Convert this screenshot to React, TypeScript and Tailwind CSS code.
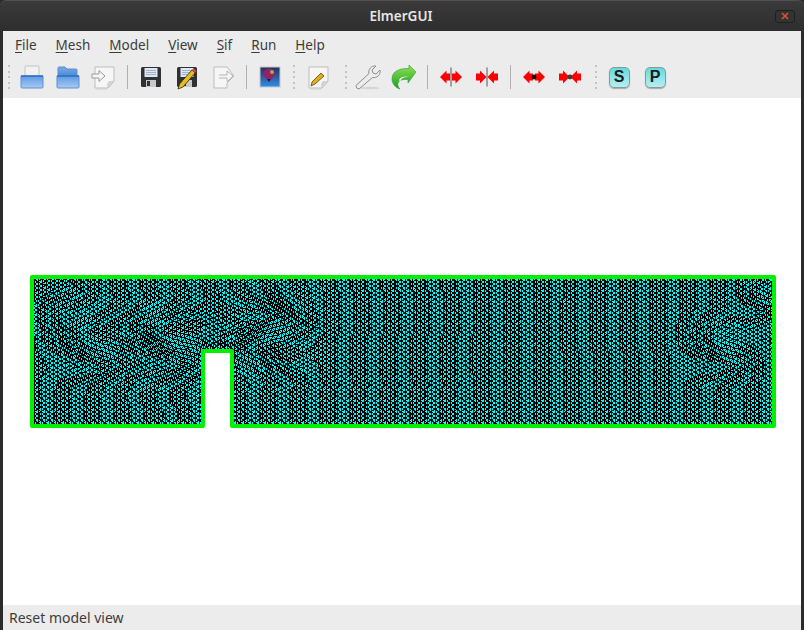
import { useMemo, type ReactNode } from 'react';

const MENUS = ['File', 'Mesh', 'Model', 'View', 'Sif', 'Run', 'Help'];

function Glyph({ children }: { children: ReactNode }) {
  return (
    <div className="flex h-[36px] w-[36px] shrink-0 items-center justify-center">
      <svg width="26" height="26" viewBox="0 0 26 26">
        {children}
      </svg>
    </div>
  );
}

function Dotted({ className }: { className: string }) {
  return (
    <div className={`flex h-[24px] w-[2px] shrink-0 flex-col justify-between ${className}`}>
      {[0, 1, 2, 3, 4].map((i) => (
        <span key={i} className="h-[2px] w-[2px] bg-[#c4c4c4]" />
      ))}
    </div>
  );
}

function Solid({ className }: { className: string }) {
  return <div className={`h-[24px] w-px shrink-0 bg-[#b0b0b0] ${className}`} />;
}

function PageShape({ children }: { children?: ReactNode }) {
  return (
    <>
      <path d="M4 3h19v14l-6 7H4z" fill="#f6f6f6" stroke="#bdbdbd" />
      <path d="M17 24q-1-5 1-6.500q3 .5 5-.5z" fill="#d6d6d6" stroke="#bdbdbd" strokeWidth="0.6" />
      <path d="M5 25h11" stroke="#cfcfcf" />
      {children}
    </>
  );
}

function FolderTray() {
  return (
    <>
      <path d="M2 12h22v11q0 1-1 1H3q-1 0-1-1z" fill="url(#blue)" stroke="#5e8fd0" />
      <path d="M2 12h22" stroke="#2f6dc0" strokeWidth="1.5" />
    </>
  );
}

function Floppy({ children }: { children?: ReactNode }) {
  return (
    <>
      <rect x="3" y="3" width="20" height="20" rx="1.5" fill="#2e3236" />
      <rect x="6.5" y="4" width="13" height="9" fill="#dfe6ee" />
      <path d="M8 6.500h10M8 8.500h10M8 10.500h10" stroke="#9db4cf" />
      <rect x="8" y="16" width="10" height="7" fill="#c8c8c8" />
      <rect x="9" y="17" width="3" height="5" fill="#333" />
      {children}
    </>
  );
}

function RedArrows({ inward, dot }: { inward?: boolean; dot?: boolean }) {
  const left = inward ? 'M2 9.500h4V6.500l6.500 6.500L6 19.500v-3H2z' : 'M2 13l6.500-6.500v3H12v7H8.500v3z';
  const right = inward ? 'M24 9.500h-4V6.500L13.500 13l6.500 6.500v-3h4z' : 'M24 13l-6.500-6.500v3H14v7h3.500v3z';
  return (
    <>
      <path d={left} fill="#f00" />
      <path d={right} fill="#f00" />
      {dot ? (
        <circle cx="13" cy="13" r="2.400" fill={inward ? '#3c3c3c' : '#111'} />
      ) : (
        <path d="M13 3.500v19" stroke="#555" strokeWidth="1" />
      )}
    </>
  );
}

function Badge({ letter }: { letter: string }) {
  return (
    <div className="flex h-[36px] w-[36px] shrink-0 items-center justify-center">
      <div className="flex h-[21px] w-[21px] items-center justify-center rounded-[5px] border border-[#7f9c9e] bg-gradient-to-b from-[#5fdade] to-[#b6eef0] font-['Liberation_Sans',sans-serif] text-[16px] leading-none font-bold text-[#1c1c1c] shadow-[0_1px_1px_#aaa]">
        {letter}
      </div>
    </div>
  );
}

// triangles with upright edges, the columns staggered, nudged around the notch
function buildMesh() {
  const dx = 3.75;
  const dy = 4.4;
  const warps = [
    { x: 170, y: 345, r: 42, k: 4 },
    { x: 262, y: 335, r: 38, k: -4 },
    { x: 90, y: 350, r: 34, k: 3 },
    { x: 720, y: 350, r: 30, k: 3 },
    { x: 60, y: 300, r: 24, k: -2 },
    { x: 760, y: 300, r: 20, k: 2 },
  ];
  const at = (c: number, r: number): [number, number] => {
    let x = 30 + c * dx;
    let y = 273 + r * dy + (c % 2 ? dy / 2 : 0);
    for (const w of warps) {
      const ox = x - w.x;
      const oy = y - w.y;
      const f = Math.exp(-(ox * ox + oy * oy) / (w.r * w.r));
      x += (Math.sin(oy * 0.09) * w.k + (oy / w.r) * w.k * 0.7) * f;
      y += (Math.cos(ox * 0.08) * w.k * 0.8 - (ox / w.r) * w.k * 0.7) * f;
    }
    return [Math.round(x), Math.round(y)];
  };
  let d = '';
  for (let c = 0; c < 201; c++) {
    for (let r = 0; r < 37; r++) {
      const p = at(c, r);
      const south = at(c, r + 1);
      const east = at(c + 1, c % 2 ? r : r - 1);
      const other = at(c + 1, c % 2 ? r + 1 : r);
      d += `M${p[0]} ${p[1]}L${south[0]} ${south[1]}M${p[0]} ${p[1]}L${east[0]} ${east[1]}M${p[0]} ${p[1]}L${other[0]} ${other[1]}`;
    }
  }
  return d;
}

const OUTLINE = '32,277 774,277 774,426 232,426 232,351 203,351 203,426 32,426';

function MeshView() {
  const d = useMemo(buildMesh, []);
  return (
    <svg width="798" height="507" viewBox="3 98 798 507" className="block">
      <defs>
        <clipPath id="meshClip">
          <polygon points={OUTLINE} />
        </clipPath>
      </defs>
      <polygon points={OUTLINE} fill="#00ffff" />
      <path d={d} clipPath="url(#meshClip)" fill="none" stroke="#000" strokeWidth="1" shapeRendering="crispEdges" />
      <path d="M32 426V277H774V426H232V351H203V426Z" fill="none" stroke="#00f000" strokeWidth="4" strokeLinejoin="round" />
    </svg>
  );
}

export default function App() {
  return (
    <div className="flex h-[630px] w-[804px] flex-col overflow-hidden bg-[#2b2b2b] font-['Noto_Sans',sans-serif]">
      <svg width="0" height="0" className="absolute">
        <defs>
          <linearGradient id="blue" x1="0" y1="0" x2="0" y2="1">
            <stop offset="0" stopColor="#5c9ae6" />
            <stop offset="1" stopColor="#a9c9f0" />
          </linearGradient>
          <linearGradient id="blueFold" x1="0" y1="0" x2="0" y2="1">
            <stop offset="0" stopColor="#7aa9e4" />
            <stop offset="1" stopColor="#4c8ad8" />
          </linearGradient>
          <linearGradient id="green" x1="0" y1="0" x2="0" y2="1">
            <stop offset="0" stopColor="#8fe34f" />
            <stop offset="1" stopColor="#1f9a2c" />
          </linearGradient>
          <linearGradient id="sky" x1="0" y1="0" x2="0" y2="1">
            <stop offset="0" stopColor="#2a2a5e" />
            <stop offset="1" stopColor="#2f8fe8" />
          </linearGradient>
        </defs>
      </svg>

      <div className="flex h-[31px] shrink-0 items-center rounded-t-[6px] border-t border-[#505050] bg-gradient-to-b from-[#3a3a3a] to-[#2e2e2e] pr-[9px]">
        <span className="flex-1 pl-[27px] text-center text-[13.5px] font-semibold text-[#e6e6e6]">ElmerGUI</span>
        <div className="flex h-[13px] w-[20px] items-center justify-center rounded-[3px] border border-[#1f1f1f] bg-[#333]">
          <svg width="8" height="8" viewBox="0 0 8 8">
            <path d="M1 1l6 6M7 1L1 7" stroke="#d9503a" strokeWidth="1.7" />
          </svg>
        </div>
      </div>

      <div className="mx-[3px] flex min-h-0 flex-1 flex-col bg-white">
        <div className="flex h-[67px] shrink-0 flex-col bg-[#ececec]">
          <nav className="flex h-[28px] items-center gap-[19px] pl-[12px] text-[13.5px] text-[#3c3c3c]">
            {MENUS.map((m) => (
              <span key={m}>
                <span className="underline decoration-1 underline-offset-2">{m[0]}</span>
                {m.slice(1)}
              </span>
            ))}
          </nav>
          <div className="flex h-[36px] items-center">
            <Dotted className="ml-[5px] mr-[4px]" />
            <Glyph>
              <rect x="6" y="2" width="14" height="12" rx="1" fill="#f2f2f2" stroke="#c4c4c4" />
              <FolderTray />
            </Glyph>
            <Glyph>
              <path d="M3 12V4q0-1 1-1h6l2 2h9q1 0 1 1v6z" fill="url(#blueFold)" stroke="#5f8fcc" />
              <FolderTray />
            </Glyph>
            <Glyph>
              <PageShape>
                <path d="M1 10h7V6.500l6 5.500-6 5.500V14H1z" fill="#f6f6f6" stroke="#9a9a9a" />
              </PageShape>
            </Glyph>
            <Solid className="ml-[5px] mr-[5px]" />
            <Glyph>
              <Floppy />
            </Glyph>
            <Glyph>
              <Floppy>
                <path d="M4 25l1.500-5L18 6l3 3L9 23z" fill="#e8bd1e" stroke="#33260a" strokeWidth="0.8" />
                <path d="M18 6l1.500-2 3 3-1.500 2z" fill="#d8463f" />
              </Floppy>
            </Glyph>
            <Glyph>
              <path d="M4 3h13l7 9-7 7v5H4z" fill="#f6f6f6" stroke="#bdbdbd" />
              <path d="M9 11h8V7M17 17v-3H9" fill="none" stroke="#b5b5b5" />
              <path d="M17 7l6 5-6 6" fill="none" stroke="#b5b5b5" />
            </Glyph>
            <Solid className="ml-[5px] mr-[5px]" />
            <Glyph>
              <rect x="3" y="3" width="20" height="20" fill="url(#sky)" stroke="#c8c8c8" />
              <circle cx="12" cy="10" r="5.500" fill="#8d2468" />
              <circle cx="15" cy="8" r="2" fill="#b9a13c" />
              <path d="M10 15l2 3 2-3z" fill="#3a1030" />
            </Glyph>
            <Dotted className="ml-[5px] mr-[8px]" />
            <div className="-ml-[3px] mr-[3px]">
              <Glyph>
                <PageShape>
                  <path d="M6 22l1-4L16 9l3 3-9 8z" fill="#e2ae1c" stroke="#5b4410" strokeWidth="0.8" />
                </PageShape>
              </Glyph>
            </div>
            <Dotted className="ml-[6px] mr-[3px]" />
            <Glyph>
              <ellipse cx="15" cy="24" rx="10" ry="1.200" fill="#d4d4d4" />
              <path
                d="M1 21.500 14 9.500C13 5.500 16 1.500 21 2L17 6l1 3 3 1 4-4c1 4.500-3 8.500-7.500 7.500L4 25Q1 25 1 21.500Z"
                fill="#ececec"
                stroke="#8e8e8e"
              />
            </Glyph>
            <Glyph>
              <path
                d="M25 8l-7-7v3.500C9 4 1 7 1 15c0 5 4 9 8 10-2-2-2.500-4-2-6 1-3 5-4 10-3.500V19z"
                fill="url(#green)"
                stroke="#2c9a32"
                strokeWidth="0.6"
              />
              <path d="M8 16c1-3 5-4 10-3.500-4 .5-7 1-9 5z" fill="#e8f5e0" />
            </Glyph>
            <Solid className="ml-[5px] mr-[5px]" />
            <Glyph>
              <RedArrows />
            </Glyph>
            <Glyph>
              <RedArrows inward />
            </Glyph>
            <Solid className="ml-[5px] mr-[5px]" />
            <Glyph>
              <RedArrows dot />
            </Glyph>
            <Glyph>
              <RedArrows inward dot />
            </Glyph>
            <Dotted className="ml-[7px] mr-[4px]" />
            <Badge letter="S" />
            <Badge letter="P" />
          </div>
        </div>

        <main className="min-h-0 flex-1 bg-white">
          <MeshView />
        </main>

        <footer className="flex h-[25px] shrink-0 items-center bg-[#ececec] pl-[6px] text-[14px] text-[#3c3c3c]">
          Reset model view
        </footer>
      </div>
    </div>
  );
}
